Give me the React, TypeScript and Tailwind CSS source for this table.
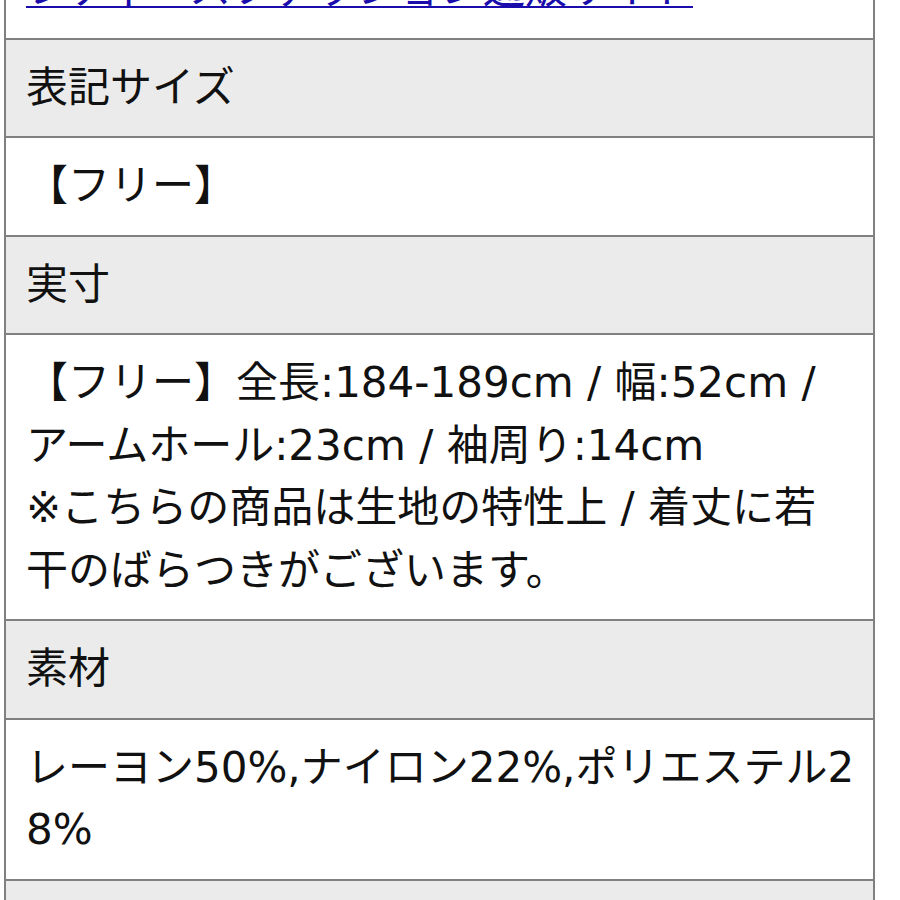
import React from "react";

const font = { fontFamily: '"DejaVu Sans", "Noto Sans CJK JP", sans-serif' };

function HeaderRow({ children }: { children: React.ReactNode }) {
  return (
    <div className="border-t-2 border-[#808080] bg-[#ebebeb] pl-[20px] pr-[12px] py-[17px] text-[42px] leading-[62.5px] text-[#111]">
      {children}
    </div>
  );
}

function ContentRow({ children }: { children: React.ReactNode }) {
  return (
    <div className="border-t-2 border-[#808080] bg-white pl-[20px] pr-[12px] py-[17px] text-[42px] leading-[62.5px] text-[#111] break-all">
      {children}
    </div>
  );
}

export default function App() {
  return (
    <div className="w-[900px] h-[900px] overflow-hidden bg-white" style={font}>
      <div className="ml-[4px] w-[871px] border-l-2 border-r-2 border-[#808080] -mt-[59px]">
        <div className="bg-white pl-[20px] pr-[12px] py-[17px] text-[42px] leading-[62.5px]">
          <a className="text-[#1a0dab] underline decoration-2 underline-offset-[3px]">レディースファッション通販サイト</a>
        </div>
        <HeaderRow>表記サイズ</HeaderRow>
        <ContentRow>【フリー】</ContentRow>
        <HeaderRow>実寸</HeaderRow>
        <ContentRow>
          【フリー】全長:184-189cm / 幅:52cm /
          <br />
          アームホール:23cm / 袖周り:14cm
          <br />
          ※こちらの商品は生地の特性上 / 着丈に若
          <br />
          干のばらつきがございます。
        </ContentRow>
        <HeaderRow>素材</HeaderRow>
        <ContentRow>
          レーヨン50%,ナイロン22%,ポリエステル2
          <br />
          8%
        </ContentRow>
        <HeaderRow>&nbsp;</HeaderRow>
      </div>
    </div>
  );
}
